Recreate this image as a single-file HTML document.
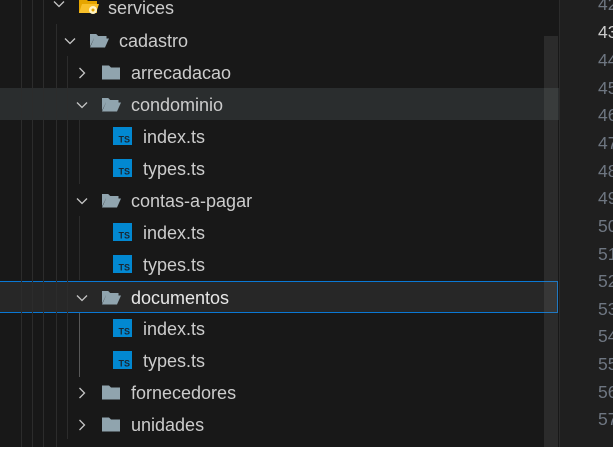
<!DOCTYPE html>
<html><head><style>
*{margin:0;padding:0;box-sizing:border-box}
body{width:613px;height:450px;background:#fff;position:relative;overflow:hidden;font-family:"Liberation Sans",sans-serif}
#side{position:absolute;left:0;top:0;width:559px;height:447px;background:#181818}
#ed{position:absolute;left:560px;top:0;width:53px;height:447px;background:#1f1f1f}
#div{position:absolute;left:559px;top:0;width:1px;height:447px;background:#2b2b2b}
.g{position:absolute;width:1px;background:#2c2c2c}
.t{position:absolute;top:4px;font-size:18px;color:#cccccc;line-height:22px}
.ic{position:absolute}
.ln{position:absolute;left:598px;font-size:17.5px;color:#6e7681;line-height:20px}
</style></head><body>
<div id="side"></div>
<div id="ed"></div>
<div id="div"></div>
<div style="position:absolute;left:0;top:88px;width:559px;height:32px;background:#2a2d2e"></div>
<div style="position:absolute;left:-1px;top:281px;width:559px;height:32px;background:#272727;border:1px solid #0a78d4"></div>
<div style="position:absolute;left:544px;top:36px;width:14px;height:411px;background:rgba(121,121,121,0.2)"></div>
<div class="g" style="left:21px;top:0;height:447px"></div>
<div class="g" style="left:32px;top:0;height:447px"></div>
<div class="g" style="left:43px;top:0;height:447px"></div>
<div class="g" style="left:56px;top:24px;height:423px"></div>
<div class="g" style="left:67px;top:56px;height:383px"></div>
<div class="g" style="left:79px;top:120px;height:64px"></div>
<div class="g" style="left:79px;top:216px;height:64px"></div>
<div class="g" style="left:79px;top:313px;height:64px;background:#585858"></div>
<svg width="0" height="0" style="position:absolute">
<defs>
<symbol id="down" viewBox="0 0 12 12"><path d="M1 3.5 L6 8.5 L11 3.5" fill="none" stroke="#c5c5c5" stroke-width="1.3"/></symbol>
<symbol id="right" viewBox="0 0 12 12"><path d="M3.5 1 L8.5 6 L3.5 11" fill="none" stroke="#c5c5c5" stroke-width="1.3"/></symbol>
<symbol id="fo" viewBox="0 0 20 16"><path d="M1 2h6l2 2h8v2H5L1 14z" fill="#90a4ae"/><path d="M5 6h15l-4 9H1z" fill="#90a4ae"/><path d="M1 2h6l2 2h8v2" fill="none" stroke="#90a4ae"/></symbol>
<symbol id="fc" viewBox="0 0 20 16"><path d="M1 1h7l2 2h9v12H1z" fill="#90a4ae"/></symbol>
<symbol id="ts" viewBox="0 0 19 18"><rect width="19" height="18" fill="#0288d1"/><text x="17" y="15.5" font-family="Liberation Sans" font-weight="bold" font-size="9" fill="#1a2733" text-anchor="end">TS</text></symbol>
</defs></svg>
<svg class="ic" style="left:53px;top:-2px" width="12" height="12"><use href="#down"/></svg>
<svg class="ic" style="left:78px;top:-2px" width="22" height="18" viewBox="0 0 22 18"><path d="M1 1h7l2 2h9v12H1z" fill="#e6a500"/><path d="M4 6h17l-3 9H1z" fill="#f9c02a"/><circle cx="15" cy="12" r="4" fill="#fff3c4"/><circle cx="15" cy="12" r="1.5" fill="#e6a500"/></svg>
<div class="t" style="left:108px;top:-3px">services</div>
<svg class="ic" style="left:64px;top:35px" width="12" height="12"><use href="#down"/></svg>
<svg class="ic" style="left:89px;top:32px" width="20" height="17"><use href="#fo"/></svg>
<div class="t" style="left:119px;top:30px">cadastro</div>
<svg class="ic" style="left:76px;top:67px" width="12" height="12"><use href="#right"/></svg>
<svg class="ic" style="left:101px;top:64px" width="20" height="17"><use href="#fc"/></svg>
<div class="t" style="left:131px;top:62px">arrecadacao</div>
<svg class="ic" style="left:76px;top:99px" width="12" height="12"><use href="#down"/></svg>
<svg class="ic" style="left:101px;top:96px" width="20" height="17"><use href="#fo"/></svg>
<div class="t" style="left:131px;top:94px">condominio</div>
<svg class="ic" style="left:113px;top:127px" width="19" height="18"><use href="#ts"/></svg>
<div class="t" style="left:143px;top:126px">index.ts</div>
<svg class="ic" style="left:113px;top:159px" width="19" height="18"><use href="#ts"/></svg>
<div class="t" style="left:143px;top:158px">types.ts</div>
<svg class="ic" style="left:76px;top:195px" width="12" height="12"><use href="#down"/></svg>
<svg class="ic" style="left:101px;top:192px" width="20" height="17"><use href="#fo"/></svg>
<div class="t" style="left:131px;top:190px">contas-a-pagar</div>
<svg class="ic" style="left:113px;top:223px" width="19" height="18"><use href="#ts"/></svg>
<div class="t" style="left:143px;top:222px">index.ts</div>
<svg class="ic" style="left:113px;top:255px" width="19" height="18"><use href="#ts"/></svg>
<div class="t" style="left:143px;top:254px">types.ts</div>
<svg class="ic" style="left:76px;top:292px" width="12" height="12"><use href="#down"/></svg>
<svg class="ic" style="left:101px;top:289px" width="20" height="17"><use href="#fo"/></svg>
<div class="t" style="left:131px;top:287px;color:#e7e7e7">documentos</div>
<svg class="ic" style="left:113px;top:319px" width="19" height="18"><use href="#ts"/></svg>
<div class="t" style="left:143px;top:318px">index.ts</div>
<svg class="ic" style="left:113px;top:351px" width="19" height="18"><use href="#ts"/></svg>
<div class="t" style="left:143px;top:350px">types.ts</div>
<svg class="ic" style="left:76px;top:387px" width="12" height="12"><use href="#right"/></svg>
<svg class="ic" style="left:101px;top:384px" width="20" height="17"><use href="#fc"/></svg>
<div class="t" style="left:131px;top:382px">fornecedores</div>
<svg class="ic" style="left:76px;top:419px" width="12" height="12"><use href="#right"/></svg>
<svg class="ic" style="left:101px;top:416px" width="20" height="17"><use href="#fc"/></svg>
<div class="t" style="left:131px;top:414px">unidades</div>
<div class="ln" style="top:-6px">42</div>
<div class="ln" style="top:22px;color:#cccccc">43</div>
<div class="ln" style="top:50px">44</div>
<div class="ln" style="top:78px">45</div>
<div class="ln" style="top:105px">46</div>
<div class="ln" style="top:133px">47</div>
<div class="ln" style="top:161px">48</div>
<div class="ln" style="top:188px">49</div>
<div class="ln" style="top:216px">50</div>
<div class="ln" style="top:244px">51</div>
<div class="ln" style="top:271px">52</div>
<div class="ln" style="top:299px">53</div>
<div class="ln" style="top:326px">54</div>
<div class="ln" style="top:354px">55</div>
<div class="ln" style="top:382px">56</div>
<div class="ln" style="top:409px">57</div>
</body></html>
